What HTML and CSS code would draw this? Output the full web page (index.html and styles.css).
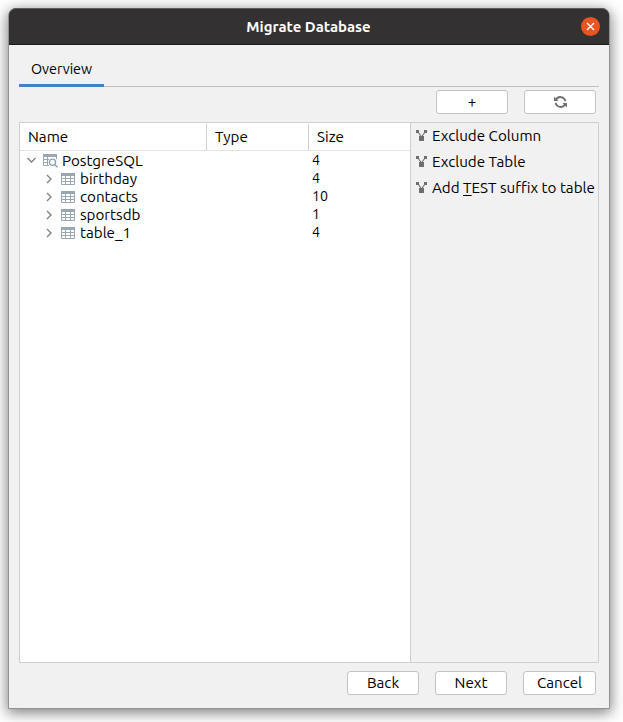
FILE: index.html
```html
<!DOCTYPE html>
<html lang="en">
<head>
<meta charset="utf-8">
<title>Migrate Database</title>
<link rel="stylesheet" href="styles.css">
</head>
<body>
<svg class="defs" width="0" height="0" aria-hidden="true">
  <symbol id="table" viewBox="0 0 14 12">
    <path fill="#9aa7b0" d="M0 0h14v3H0z"/>
    <path fill="none" stroke="#9aa7b0" d="M.5 3v8.500h13V3M0 5.500h14M0 8.500h14M4.500 3v9M9.500 3v9"/>
  </symbol>
  <symbol id="tables" viewBox="0 0 15 14">
    <path fill="#9aa7b0" d="M0 0h14v3H0z"/>
    <path fill="none" stroke="#9aa7b0" d="M.5 3v8.500H6M0 5.500h6M0 8.500h5M4.500 3v9M13.500 3v2"/>
    <circle cx="9.500" cy="8.200" r="3.100" fill="none" stroke="#8fa3b0" stroke-width="1.300"/>
    <path stroke="#8fa3b0" stroke-width="1.500" d="M11.700 10.500l2.800 2.800"/>
  </symbol>
  <symbol id="right" viewBox="0 0 8 10"><path fill="none" stroke="#7f7f7f" stroke-width="1.300" d="M2 1l4 4-4 4"/></symbol>
  <symbol id="down" viewBox="0 0 10 8"><path fill="none" stroke="#7f7f7f" stroke-width="1.300" d="M.5 1l4 4 4-4"/></symbol>
  <symbol id="rule" viewBox="0 0 12 12">
    <path fill="#6e6e6e" d="M0 0h3v3H0zM8 0h3v3H8zM3 6h5v5H3z"/>
    <path stroke="#6e6e6e" stroke-width="1.100" d="M2 2l3.200 4.500M9 2L5.800 6.500"/>
  </symbol>
</svg>
<div class="window">
  <header class="titlebar">
    <h1>Migrate Database</h1>
    <button class="close" aria-label="Close"><svg width="9" height="9" viewBox="0 0 9 9"><path stroke="#fff" stroke-width="1.400" d="M1 1l7 7M8 1L1 8"/></svg></button>
  </header>
  <nav class="tabs"><div class="tab"><span>Overview</span></div></nav>
  <div class="toolbar">
    <button class="btn">+</button>
    <button class="btn" aria-label="Refresh"><svg width="13" height="12" viewBox="0 0 13 12"><path fill="none" stroke="#6e6e6e" stroke-width="1.900" d="M1.800 3.900C3.600.3 8.300 0 10.600 3.300L11.500 5M11.200 8.100C9.400 11.700 4.700 12 2.400 8.700L1.500 7"/><path fill="#6e6e6e" d="M0 .8V5h4.500zM13 11.200V7H8.500z"/></svg></button>
  </div>
  <main class="panel">
    <section class="tree">
      <div class="head"><span class="name">Name</span><span class="type">Type</span><span class="size">Size</span></div>
      <div class="rows">
        <div class="row root"><svg class="down"><use href="#down"/></svg><svg class="tables"><use href="#tables"/></svg><span>PostgreSQL</span><span class="num">4</span></div>
        <div class="row"><svg class="right"><use href="#right"/></svg><svg class="table"><use href="#table"/></svg><span>birthday</span><span class="num">4</span></div>
        <div class="row"><svg class="right"><use href="#right"/></svg><svg class="table"><use href="#table"/></svg><span>contacts</span><span class="num">10</span></div>
        <div class="row"><svg class="right"><use href="#right"/></svg><svg class="table"><use href="#table"/></svg><span>sportsdb</span><span class="num">1</span></div>
        <div class="row"><svg class="right"><use href="#right"/></svg><svg class="table"><use href="#table"/></svg><span>table_1</span><span class="num">4</span></div>
      </div>
    </section>
    <aside class="rules">
      <div class="rule"><svg><use href="#rule"/></svg><span>Exclude Column</span></div>
      <div class="rule"><svg><use href="#rule"/></svg><span>Exclude Table</span></div>
      <div class="rule"><svg><use href="#rule"/></svg><span>Add <u>T</u>EST suffix to table</span></div>
    </aside>
  </main>
  <footer class="actions">
    <button class="btn">Back</button><button class="btn">Next</button><button class="btn cancel">Cancel</button>
  </footer>
</div>
</body>
</html>
```
FILE: styles.css
```css
* { box-sizing: border-box; }
body {
  margin: 0;
  padding: 8px;
  height: 722px;
  overflow: hidden;
  background: #fff;
  color: #000;
  font: 15.200px/18px Ubuntu, "Noto Sans", sans-serif;
}
.defs { position: absolute; }
svg { display: block; flex: none; }
.window {
  width: 602px;
  height: 701px;
  border: 1px solid #929292;
  border-radius: 8px 8px 0 0;
  background: #f1f1f1;
  box-shadow: 0 3px 14px 1px rgba(0, 0, 0, .5);
  display: flex;
  flex-direction: column;
}
.titlebar {
  height: 37px;
  margin-top: -1px;
  flex: none;
  display: grid;
  grid-template-columns: 27px 1fr 28px;
  align-items: center;
  background: #333132;
  border-top: 1px solid #5c5c5c;
  border-bottom: 1px solid #1c1c1c;
  border-radius: 7px 7px 0 0;
}
h1 {
  grid-column: 2;
  margin: 0;
  text-align: center;
  color: #fff;
  font-size: 14.900px;
  font-weight: 700;
}
.close {
  width: 19px;
  height: 19px;
  padding: 0;
  border: 0;
  border-radius: 50%;
  background: #e95420;
  display: grid;
  place-items: center;
}
.tabs {
  height: 42px;
  margin: 0 10px;
  flex: none;
  border-bottom: 1px solid #c0c0c0;
}
.tab {
  width: 85px;
  height: 42px;
  padding: 15px 0 0 12px;
  border-bottom: 3px solid #4083c9;
  font-size: 14.300px;
}
.toolbar {
  display: flex;
  justify-content: flex-end;
  gap: 16px;
  padding: 3px 13px 0 0;
  height: 35px;
  flex: none;
}
.btn {
  width: 72px;
  height: 24px;
  padding: 0;
  display: flex;
  align-items: center;
  justify-content: center;
  border: 1px solid #c4c4c4;
  border-radius: 3px;
  background: #fff;
  color: #000;
  font: inherit;
}
.panel {
  height: 541px;
  margin: 0 10px;
  flex: none;
  display: grid;
  grid-template-columns: 390px 1fr;
  border: 1px solid #cfcfcf;
}
.tree { background: #fff; }
.head {
  height: 28px;
  display: grid;
  grid-template-columns: 187px 102px 1fr;
  padding-top: 1px;
  border-bottom: 1px solid #e3e3e3;
}
.head span { height: 26px; padding: 4px 0 0 8px; }
.head .name, .head .type { border-right: 1px solid #cfcfcf; }
.rows { padding-top: 1px; }
.row {
  height: 18px;
  display: grid;
  grid-template-columns: 16px 19px 232px 1fr;
  padding-left: 25px;
  align-items: center;
}
.root { grid-template-columns: 16px 19px 250px 1fr; padding-left: 7px; }
.num { font-size: 14.200px; margin-top: -2px; }
.down { width: 10px; height: 8px; }
.right { width: 8px; height: 10px; }
.table { width: 14px; height: 12px; }
.tables { width: 15px; height: 14px; }
.rules { border-left: 1px solid #cfcfcf; }
.rule { height: 26px; display: flex; align-items: center; white-space: nowrap; }
.rule svg { width: 12px; height: 12px; margin: 0 4px 0 5px; }
u { text-underline-offset: 2px; text-decoration-thickness: 1px; }
.actions {
  display: flex;
  justify-content: flex-end;
  gap: 16px;
  padding: 8px 13px 0 0;
}
.cancel { width: 73px; }
```
